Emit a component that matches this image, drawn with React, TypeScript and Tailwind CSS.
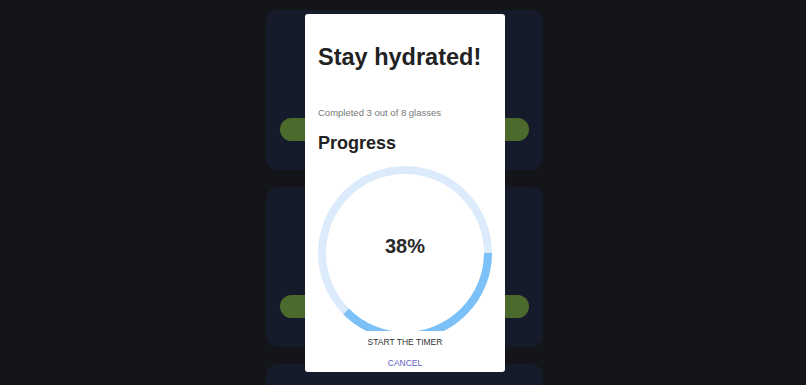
import React from "react";

function Card() {
  return (
    <div className="h-[160px] w-[277px] shrink-0 rounded-[12px] bg-[#161b2c] px-[14px] pt-[108px]">
      <div className="h-[23px] w-full rounded-full bg-[#4b6a2c]" />
    </div>
  );
}

function Ring() {
  const r = 83;
  const c = 2 * Math.PI * r;
  const pct = 0.375;
  return (
    <div className="relative mx-auto h-[165px] w-[174px] overflow-hidden">
      <svg width="174" height="174" viewBox="0 0 174 174" className="block">
        <circle cx="87" cy="87" r={r} fill="none" stroke="#dcebfb" strokeWidth="8" />
        <circle
          cx="87"
          cy="87"
          r={r}
          fill="none"
          stroke="#7bc0f6"
          strokeWidth="8"
          strokeDasharray={`${c * pct} ${c}`}
        />
      </svg>
      <div className="absolute left-0 top-0 flex h-[174px] w-[174px] items-center justify-center pb-[14px]">
        <span className="text-[20px] font-bold leading-[24px] text-[#2a2a2a]">38%</span>
      </div>
    </div>
  );
}

export default function App() {
  return (
    <div
      className="relative h-[385px] w-full overflow-hidden bg-[#141519]"
      style={{ fontFamily: '"Liberation Sans", Arial, sans-serif' }}
    >
      <div className="flex flex-col items-center gap-[17px] pt-[10px] pl-[2px]">
        <Card />
        <Card />
        <Card />
      </div>

      <div className="absolute left-[305px] top-[14px] flex h-[358px] w-[200px] flex-col rounded-[3px] bg-white px-[13px] pt-[29px]">
        <h1 className="text-[23.5px] font-bold leading-[28px] text-[#222222]">Stay hydrated!</h1>
        <p className="mt-[36px] text-[9.5px] leading-[12px] text-[#777777]">Completed 3 out of 8 glasses</p>
        <h2 className="mt-[13px] text-[18px] font-bold leading-[22px] text-[#222222]">Progress</h2>
        <div className="mt-[12px]">
          <Ring />
        </div>
        <div className="mt-[5px] text-center text-[8.5px] leading-[12px] text-[#333333]">START THE TIMER</div>
        <div className="mt-[9px] text-center text-[8.5px] leading-[12px] text-[#5d5fc0]">CANCEL</div>
      </div>
    </div>
  );
}
